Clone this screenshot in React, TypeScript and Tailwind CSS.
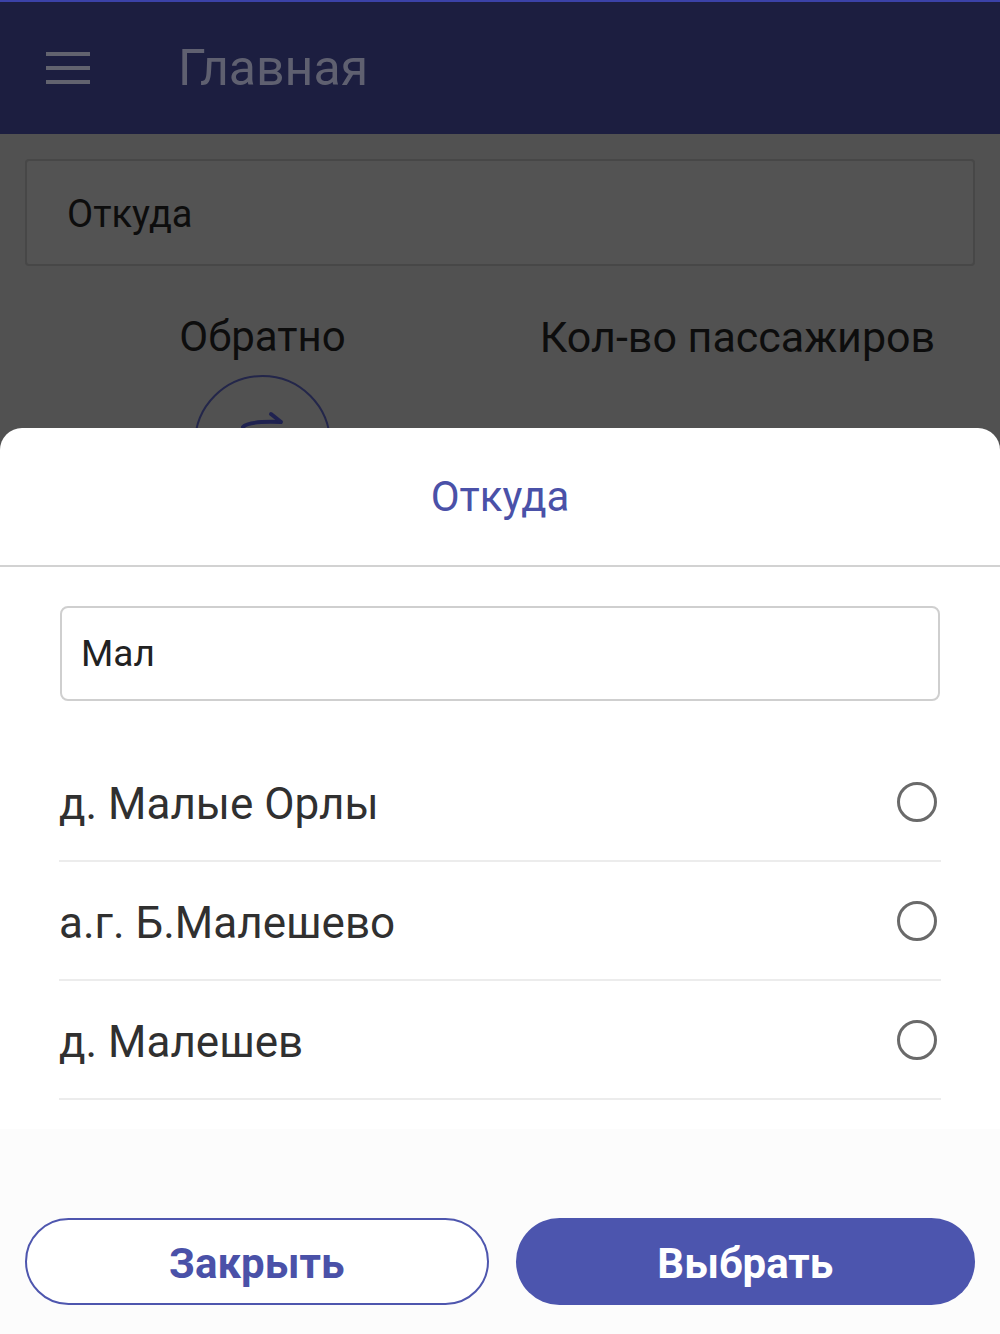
import React from 'react';

const places = ['д. Малые Орлы', 'а.г. Б.Малешево', 'д. Малешев'];

function MenuIcon() {
  return (
    <div className="flex w-[44px] flex-col gap-[10px]">
      <span className="h-[4px] w-full bg-[#62636f]" />
      <span className="h-[4px] w-full bg-[#62636f]" />
      <span className="h-[4px] w-full bg-[#62636f]" />
    </div>
  );
}

function Radio() {
  return <span className="mr-[4px] h-[40px] w-[40px] rounded-full border-[3px] border-[#6a6a6a]" />;
}

export default function App() {
  return (
    <div
      className="relative flex h-[1334px] w-[1000px] flex-col overflow-hidden bg-[#515151]"
      style={{ fontFamily: 'Roboto, "Noto Sans", sans-serif' }}
    >
      {/* dimmed app behind the sheet */}
      <header className="flex h-[134px] items-center border-t-2 border-[#3b42a8] bg-[#1c1e40] pl-[46px]">
        <MenuIcon />
        <h1 className="ml-[88px] text-[50px] leading-none text-[#5f6070]">Главная</h1>
      </header>

      <main className="px-[25px] pt-[25px]">
        <div className="flex h-[107px] items-center rounded-[4px] border-2 border-[#474747] bg-[#535353] px-[40px] pt-[4px] text-[38px] text-[#0d0d0d]">
          Откуда
        </div>
        <div className="mt-[46px] grid grid-cols-2">
          <div className="flex flex-col items-center">
            <span className="text-[42px] leading-[50px] text-[#0d0d0d]">Обратно</span>
            <div className="mt-[13px] flex h-[137px] w-[137px] items-start justify-center rounded-full border-2 border-[#23264a] pt-[32px]">
              <svg width="46" height="22" viewBox="0 0 46 22" fill="none" stroke="#1f2250" strokeWidth="4" strokeLinecap="round">
                <path d="M3 18 Q8 12 40 13" />
                <path d="M31 5 L41 13" />
              </svg>
            </div>
          </div>
          <div className="flex justify-center">
            <span className="text-[43px] leading-[50px] text-[#0d0d0d]">Кол-во пассажиров</span>
          </div>
        </div>
      </main>

      {/* bottom sheet */}
      <div className="absolute inset-x-0 bottom-0 flex h-[906px] flex-col rounded-t-[22px] bg-white">
        <div className="flex h-[137px] items-center justify-center text-[42px] text-[#4a51a8]">Откуда</div>
        <div className="h-[2px] bg-[#d2d2d2]" />

        <div className="px-[60px] pt-[39px]">
          <div className="flex h-[95px] items-center rounded-[8px] border-2 border-[#cfcfcf] px-[19px] text-[37px] text-[#222]">
            Мал
          </div>
        </div>

        <ul className="mt-[42px] px-[59px]">
          {places.map((place) => (
            <li
              key={place}
              className="flex h-[119px] items-center justify-between border-b-2 border-[#ececec] text-[44px] text-[#303030]"
            >
              <span className="pt-[4px]">{place}</span>
              <Radio />
            </li>
          ))}
        </ul>

        <div className="flex-1" />

        <footer className="flex h-[205px] gap-[27px] bg-[#fcfcfc] px-[25px] pt-[89px] pb-[29px]">
          <button className="flex-1 rounded-full border-2 border-[#4e56ae] bg-white pt-[4px] text-[42px] font-bold text-[#4a51a8]">
            Закрыть
          </button>
          <button className="flex-1 rounded-full bg-[#4c55ae] pt-[4px] text-[42px] font-bold text-white">
            Выбрать
          </button>
        </footer>
      </div>
    </div>
  );
}
